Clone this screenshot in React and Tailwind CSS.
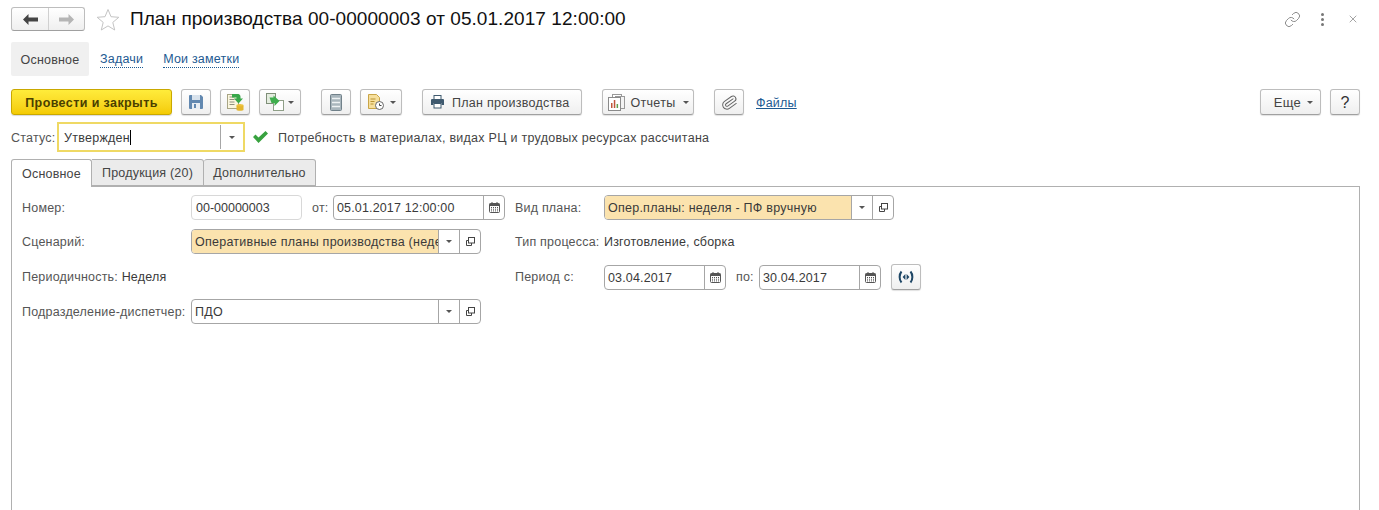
import { Link, Paperclip, X } from "lucide-react";

// Small triangle used on every drop-down button
const Caret = ({ className = "" }) => (
  <span className={`inline-block w-0 h-0 border-x-[3px] border-x-transparent border-t-[3px] border-t-[#555] ${className}`} />
);

const CalendarIcon = () => (
  <svg width="11" height="11" viewBox="0 0 11 11">
    <rect x="0.5" y="1.5" width="10" height="9" rx="1" fill="#fff" stroke="#555" />
    <rect x="0.5" y="1.5" width="10" height="2.5" fill="#555" />
    <path d="M3 0v2M8 0v2" stroke="#555" />
    <path d="M2 5.5h7M2 7.2h7M2 8.9h7" stroke="#555" strokeDasharray="1 1" />
  </svg>
);

const OpenIcon = () => (
  <svg width="11" height="11" viewBox="0 0 11 11" fill="none" stroke="#444">
    <rect x="3.5" y="1.5" width="6" height="5.5" fill="#fff" />
    <path d="M3.5 4.5h-2v5h5v-2.5" />
  </svg>
);

const SaveIcon = () => (
  <svg width="16" height="16" viewBox="0 0 16 16">
    <path d="M1 2a1 1 0 0 1 1-1h11l2 2v11a1 1 0 0 1-1 1H2a1 1 0 0 1-1-1z" fill="#6288b0" />
    <rect x="4" y="1" width="8" height="5" fill="#d8e2ec" />
    <rect x="4" y="9" width="8" height="6" fill="#e8edf2" />
    <rect x="6" y="10" width="2" height="4" fill="#6288b0" />
  </svg>
);

const PostIcon = () => (
  <svg width="19" height="19" viewBox="0 0 19 19">
    <rect x="1.5" y="1.5" width="11" height="14" fill="#fbf7df" stroke="#a8a585" />
    <path d="M3.5 4h5M3.5 6.500h5M3.500 9h5M3.500 11.500h5" stroke="#8f8f80" />
    <path d="M6 1h5.500a3 3 0 0 1 3 3v1.500H17L12.500 10.500 8 5.500h2.500V4.500H6z" fill="#38a84a" />
    <ellipse cx="14" cy="12.500" rx="3.500" ry="1.500" fill="#edc13c" />
    <path d="M10.500 12.500v4.500c0 1 7 1 7 0v-4.500c0 1-7 1-7 0z" fill="#e3b62f" />
  </svg>
);

const CopyDocsIcon = () => (
  <svg width="18" height="18" viewBox="0 0 18 18">
    <rect x="0.500" y="0.500" width="9" height="10" fill="#e4ecdf" stroke="#7f8f78" />
    <rect x="7.500" y="7.500" width="10" height="10" fill="#fff" stroke="#8f9f88" />
    <path d="M3.500 4.500h4V2.500l6 5.500-5 5v-3h-3z" fill="#3fae4e" />
  </svg>
);

const ListIcon = () => (
  <svg width="12" height="17" viewBox="0 0 12 17">
    <rect x="0.500" y="0.500" width="11" height="16" rx="1" fill="#a9b6bd" stroke="#71818a" />
    <path d="M2 4.500h8M2 8.500h8M2 12.500h8" stroke="#eef2f4" strokeWidth="1.500" />
  </svg>
);

const ScheduleIcon = () => (
  <svg width="18" height="18" viewBox="0 0 18 18">
    <path d="M1.500 1.500h8l3 3v11h-11z" fill="#f6df9c" stroke="#c9a548" />
    <path d="M3.500 6h5M3.500 8.500h4M3.500 11h3" stroke="#b89233" />
    <circle cx="12.500" cy="12.500" r="4" fill="#fff" stroke="#666" />
    <path d="M12.500 10.500v2h2" fill="none" stroke="#444" />
  </svg>
);

const PrinterIcon = () => (
  <svg width="15" height="14" viewBox="0 0 15 14">
    <rect x="4" y="0.500" width="7" height="4" fill="#fff" stroke="#3f5a6f" />
    <path d="M1 5a1 1 0 0 1 1-1h11a1 1 0 0 1 1 1v5h-2.500V8h-8v2H1z" fill="#3f5a6f" />
    <rect x="4" y="8.500" width="7" height="4.500" fill="#fff" stroke="#3f5a6f" />
  </svg>
);

const ReportIcon = () => (
  <svg width="18" height="17" viewBox="0 0 18 17">
    <rect x="5.500" y="0.500" width="9" height="12" fill="#fff" stroke="#999" />
    <rect x="8.500" y="2.500" width="9" height="12" fill="#f3f3f3" stroke="#999" />
    <rect x="1.500" y="3.500" width="12" height="13" fill="#fff" stroke="#8a8a8a" />
    <path d="M4 14V9h1.500v5zM6.800 14V6h1.500v8z" fill="#c0563b" />
    <path d="M9.600 14v-4h1.500v4z" fill="#5f9e4c" />
  </svg>
);

const PeriodIcon = () => (
  <svg width="16" height="14" viewBox="0 0 16 14" fill="none" stroke="#1f4766" strokeWidth="2">
    <path d="M3.500 1.500C1 4.500 1 9.500 3.500 12.500M12.500 1.500C15 4.500 15 9.500 12.500 12.500" />
    <path d="M7.400 4v6L4.600 7zM8.600 4v6L11.400 7z" fill="#1f4766" stroke="none" />
  </svg>
);

// Toolbar button with the light 1C gradient
const Btn = ({ children, className = "" }) => (
  <button className={`h-[26px] shrink-0 flex items-center justify-center rounded-[3px] border border-[#bdbdbd] border-b-[#a0a0a0] bg-gradient-to-b from-white to-[#efefef] shadow-[0_1px_1px_rgba(0,0,0,0.12)] text-[#333] ${className}`}>
    {children}
  </button>
);

// Input with optional trailing cells
const Field = ({ value, width, yellow, date, calendar, select, open }) => (
  <div className={`h-[25px] shrink-0 flex items-stretch rounded-[4px] border border-[#a6a6a6] overflow-hidden bg-white ${width}`}>
    <div className={`flex-1 min-w-0 pl-[3px] leading-[25px] whitespace-nowrap overflow-hidden text-[#3a3a3a] ${date ? "tracking-[0.15px]" : "tracking-[0.25px]"} ${yellow ? "bg-[#fbe3ae]" : ""}`}>
      {value}
    </div>
    {calendar && (
      <div className="w-[21px] border-l border-[#a6a6a6] flex items-center justify-center"><CalendarIcon /></div>
    )}
    {select && (
      <div className="w-[21px] border-l border-[#a6a6a6] flex items-center justify-center"><Caret /></div>
    )}
    {open && (
      <div className="w-[21px] border-l border-[#a6a6a6] flex items-center justify-center"><OpenIcon /></div>
    )}
  </div>
);

const Label = ({ children, className = "" }) => (
  <span className={`shrink-0 text-[#555] tracking-[0.2px] ${className}`}>{children}</span>
);

export default function App() {
  return (
    <div className="h-[510px] overflow-hidden bg-white text-[12.5px] leading-[20px] text-[#444] font-['Liberation_Sans',Arial,sans-serif] tracking-[0.27px]">
      {/* Title */}
      <div className="flex items-center h-[24px] mt-[7px] pl-[11px] pr-[20px]">
        <div className="flex h-[24px] w-[74px] rounded-[3px] border border-[#bdbdbd] border-b-[#a0a0a0] bg-gradient-to-b from-white to-[#efefef]">
          <div className="w-[37px] flex items-center justify-center border-r border-[#d0d0d0]">
            <svg width="15" height="11" viewBox="0 0 15 11"><path d="M0 5.500 5.500 0v3.500H15v4H5.500V11z" fill="#444" /></svg>
          </div>
          <div className="flex-1 flex items-center justify-center">
            <svg width="15" height="11" viewBox="0 0 15 11"><path d="M15 5.500 9.500 0v3.500H0v4h9.500V11z" fill="#b5b5b5" /></svg>
          </div>
        </div>
        <svg className="ml-[11px]" width="24" height="23" viewBox="0 0 24 23">
          <path d="M12 1.500l3 7.200 7.800.6-6 5.100 1.900 7.600L12 17.900 5.300 22l1.900-7.600-6-5.100L9 8.700z" fill="#fff" stroke="#c4c4c4" />
        </svg>
        <h1 className="ml-[10px] text-[19px] leading-[24px] text-[#111] tracking-[0.06px] whitespace-nowrap">План производства 00-00000003 от 05.01.2017 12:00:00</h1>
        <div className="ml-auto flex items-center">
          <Link size={17} strokeWidth={1.2} className="text-[#777] mr-[20px]" />
          <div className="flex flex-col gap-[2px] mr-[23px]">
            <span className="w-[3px] h-[3px] bg-[#777] rounded-full" />
            <span className="w-[3px] h-[3px] bg-[#777] rounded-full" />
            <span className="w-[3px] h-[3px] bg-[#777] rounded-full" />
          </div>
          <X size={12} strokeWidth={1.2} className="text-[#666]" />
        </div>
      </div>

      {/* Form sections */}
      <div className="flex items-center mt-[11px] pl-[11px] h-[34px] tracking-[0.2px]">
        <div className="w-[78px] h-full pt-[2px] bg-[#f0f0f0] rounded-[2px] flex items-center justify-center text-[#444]">Основное</div>
        <a className="ml-[11px] pt-[2px] text-[#1d5a92] border-b border-dotted border-[#1d5a92] leading-[15px]">Задачи</a>
        <a className="ml-[20px] pt-[2px] text-[#1d5a92] border-b border-dotted border-[#1d5a92] leading-[15px]">Мои заметки</a>
      </div>

      {/* Toolbar */}
      <div className="flex items-center mt-[13px] pl-[11px] pr-[19px]">
        <button className="h-[26px] w-[161px] pt-[2px] rounded-[3px] border border-[#c9a800] bg-gradient-to-b from-[#ffec3a] to-[#f4cb00] font-bold tracking-[0.4px] text-[#4a4000] shadow-[0_1px_1px_rgba(0,0,0,0.15)]">Провести и закрыть</button>
        <Btn className="w-[30px] ml-[9px]"><SaveIcon /></Btn>
        <Btn className="w-[30px] ml-[9px]"><PostIcon /></Btn>
        <Btn className="w-[42px] ml-[9px] gap-[4px]"><CopyDocsIcon /><Caret /></Btn>
        <Btn className="w-[30px] ml-[20px]"><ListIcon /></Btn>
        <Btn className="w-[42px] ml-[9px] gap-[5px]"><ScheduleIcon /><Caret /></Btn>
        <Btn className="w-[160px] ml-[20px] gap-[7px] !justify-start pl-[7px]"><PrinterIcon /><span className="pt-[2px] text-[#444]">План производства</span></Btn>
        <Btn className="w-[92px] ml-[20px] gap-[6px]"><ReportIcon /><span className="pt-[2px] text-[#444]">Отчеты</span><Caret className="ml-[2px]" /></Btn>
        <Btn className="w-[30px] ml-[20px]"><Paperclip size={17} strokeWidth={1.4} className="text-[#666] rotate-[10deg]" /></Btn>
        <a className="ml-[12px] pt-[2px] text-[#1d5a92] underline tracking-[0.2px]">Файлы</a>
        <Btn className="w-[61px] ml-auto gap-[6px] pl-[6px]"><span className="pt-[2px] text-[#444] text-[13px]">Еще</span><Caret /></Btn>
        <Btn className="w-[30px] ml-[9px] pt-[2px] text-[16px] text-[#222]">?</Btn>
      </div>

      {/* Status */}
      <div className="flex items-center mt-[7px] pl-[11px] h-[30px]">
        <Label className="w-[46px] pt-[2px]">Статус:</Label>
        <div className="w-[188px] h-[30px] flex items-center border-2 border-[#efd964] bg-white">
          <div className="flex-1 pl-[5px] flex items-center text-[#3a3a3a]"><span className="pt-[2px]">Утвержден</span><span className="w-px h-[15px] bg-black" /></div>
          <div className="w-[23px] h-[24px] border-l border-[#a6a6a6] flex items-center justify-center"><Caret /></div>
        </div>
        <svg className="ml-[8px]" width="15" height="12" viewBox="0 0 15 12"><path d="M0 6l2.500-2.500L5.500 6.500 12.500 0 15 2.500 5.500 12z" fill="#38a23f" /></svg>
        <span className="ml-[10px] pt-[2px] text-[#444]">Потребность в материалах, видах РЦ и трудовых ресурсах рассчитана</span>
      </div>

      {/* Tabs */}
      <div className="flex mt-[7px] pl-[11px] h-[28px] relative z-10 tracking-[0.2px]">
        <div className="w-[81px] h-[28px] flex items-center justify-center bg-white border border-b-0 border-[#b0b0b0] rounded-t-[3px] text-[#444]">Основное</div>
        <div className="w-[112px] h-[27px] flex items-center justify-center bg-[#ebebeb] border border-l-0 border-[#b0b0b0] rounded-tr-[3px] text-[#444]">Продукция (20)</div>
        <div className="w-[112px] h-[27px] flex items-center justify-center bg-[#ebebeb] border border-l-0 border-[#b0b0b0] rounded-t-[3px] text-[#444]">Дополнительно</div>
      </div>

      {/* Panel */}
      <div className="ml-[11px] mr-[19px] mt-[-1px] h-[400px] border border-[#b0b0b0] pl-[10px] pt-[8px] flex">
        <div className="w-[483px] shrink-0 flex flex-col">
          <div className="flex items-center">
            <Label className="w-[169px]">Номер:</Label>
            <div className="w-[111px] h-[25px] rounded-[4px] border border-[#d8d8d8] pl-[4px] leading-[25px] tracking-normal text-[#3a3a3a]">00-00000003</div>
            <Label className="ml-[10px] w-[21px]">от:</Label>
            <Field value="05.01.2017 12:00:00" width="w-[172px]" date calendar />
          </div>
          <div className="flex items-center mt-[9px]">
            <Label className="w-[169px]">Сценарий:</Label>
            <Field value="Оперативные планы производства (недели)" width="w-[290px]" yellow select open />
          </div>
          <div className="flex items-center h-[25px] mt-[10px] whitespace-nowrap">
            <Label>Периодичность:&nbsp;</Label><span className="text-[#3a3a3a] tracking-[0.2px]">Неделя</span>
          </div>
          <div className="flex items-center mt-[10px]">
            <Label className="w-[169px]">Подразделение-диспетчер:</Label>
            <Field value="ПДО" width="w-[290px]" select open />
          </div>
        </div>

        <div className="ml-[10px] flex flex-col">
          <div className="flex items-center">
            <Label className="w-[89px]">Вид плана:</Label>
            <Field value="Опер.планы: неделя - ПФ вручную" width="w-[290px]" yellow select open />
          </div>
          <div className="flex items-center h-[25px] mt-[9px] whitespace-nowrap">
            <Label className="w-[89px]">Тип процесса:</Label><span className="text-[#3a3a3a] tracking-[0.2px]">Изготовление, сборка</span>
          </div>
          <div className="flex items-center mt-[10px]">
            <Label className="w-[89px]">Период с:</Label>
            <Field value="03.04.2017" width="w-[122px]" date calendar />
            <Label className="ml-[10px] w-[23px]">по:</Label>
            <Field value="30.04.2017" width="w-[122px]" date calendar />
            <Btn className="w-[30px] ml-[10px]"><PeriodIcon /></Btn>
          </div>
        </div>
      </div>
    </div>
  );
}
